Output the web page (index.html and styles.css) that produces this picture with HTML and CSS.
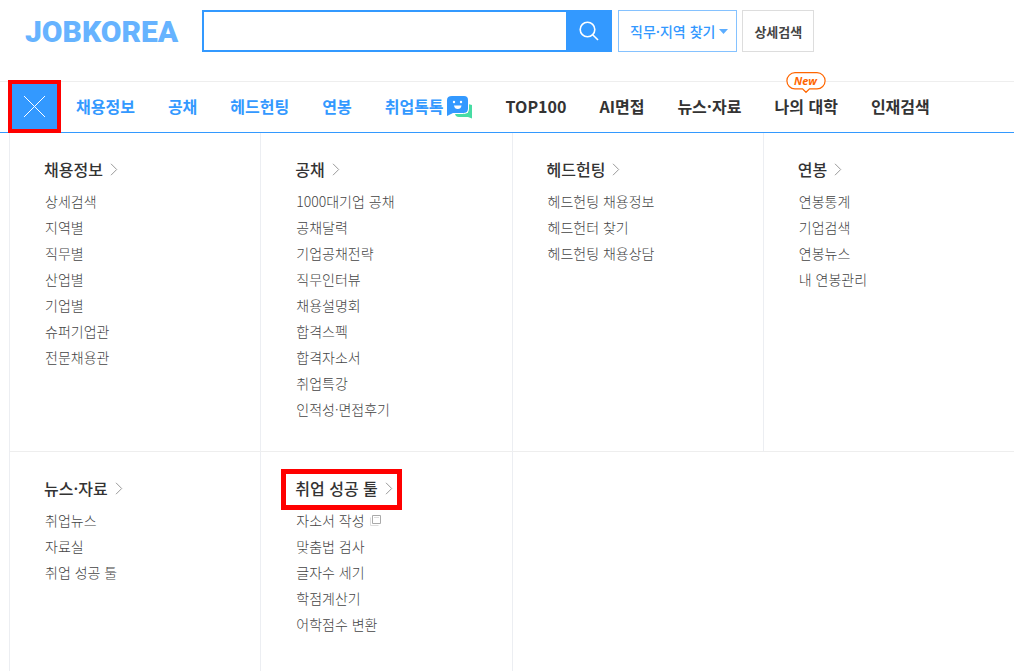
FILE: index.html
```html
<!DOCTYPE html>
<html lang="ko">
<head>
<meta charset="utf-8">
<meta name="viewport" content="width=device-width, initial-scale=1">
<title>JOBKOREA</title>
<link rel="stylesheet" href="styles.css">
</head>
<body>
<svg class="defs" aria-hidden="true">
  <symbol id="arrow" viewBox="0 0 8 13"><path d="M1 .8 6.7 6.5 1 12.2" fill="none" stroke="#999" stroke-width="1"/></symbol>
</svg>
<header class="header">
  <a class="logo" href="#">JOBKOREA</a>
  <form class="search">
    <input class="search-input" type="text" aria-label="검색어">
    <button class="search-button" type="button" aria-label="검색">
      <svg width="20" height="20" viewBox="0 0 20 20" fill="none" stroke="#fff" stroke-width="1.6"><circle cx="8.5" cy="8.5" r="7.3"/><path d="m13.7 13.7 5.3 5.3"/></svg>
    </button>
  </form>
  <button class="filter filter-blue" type="button">직무·지역 찾기<svg width="9" height="5" viewBox="0 0 9 5"><path d="M0 0h9L4.500 5z" fill="#5cadff"/></svg></button>
  <button class="filter" type="button">상세검색</button>
</header>
<nav class="nav" aria-label="주 메뉴">
  <button class="close" type="button" aria-label="전체메뉴 닫기">
    <svg width="23" height="23" viewBox="0 0 23 23"><path d="m1 1 21 21M22 1 1 22" stroke="#fff" stroke-width="1"/></svg>
  </button>
  <ul class="nav-list">
    <li><a class="blue" href="#">채용정보</a></li>
    <li><a class="blue" href="#">공채</a></li>
    <li><a class="blue" href="#">헤드헌팅</a></li>
    <li><a class="blue" href="#">연봉</a></li>
    <li><a class="blue talk" href="#">취업톡톡<svg width="26" height="24" viewBox="0 0 26 24"><path d="M8 17v1q0 4 4 4h9l4 1.500V10l-4-1v9z" fill="#47dca4"/><path d="M5 1h12q4 0 4 4v9q0 4-4 4H6l-6 3V5q0-4 5-4z" fill="#3399ff"/><path d="M21.500 9v5q0 4.500-5 4.500H8" fill="none" stroke="#fff"/><circle cx="7" cy="7" r="1.200" fill="#fff"/><circle cx="14" cy="7" r="1.200" fill="#fff"/><path d="M7 10.500h7.500q-.6 3.500-3.750 3.500T7 10.500z" fill="#fff"/></svg></a></li>
    <li><a href="#">TOP100</a></li>
    <li><a href="#">AI면접</a></li>
    <li><a href="#">뉴스·자료</a></li>
    <li class="has-badge"><a href="#">나의 대학</a>
      <span class="badge"><svg width="40" height="22" viewBox="0 0 40 22"><path d="M9 .7h22a8.100 8.100 0 0 1 0 16.200h-7.500L20 20.300l-3.500-3.400H9A8.100 8.100 0 0 1 9 .7z" fill="#fff" stroke="#f60" stroke-width="1.200"/></svg><span class="badge-text">New</span></span></li>
    <li><a href="#">인재검색</a></li>
  </ul>
</nav>
<main class="menu">
  <section class="cell">
    <h2><a href="#">채용정보<svg><use href="#arrow"/></svg></a></h2>
    <ul>
      <li><a href="#">상세검색</a></li>
      <li><a href="#">지역별</a></li>
      <li><a href="#">직무별</a></li>
      <li><a href="#">산업별</a></li>
      <li><a href="#">기업별</a></li>
      <li><a href="#">슈퍼기업관</a></li>
      <li><a href="#">전문채용관</a></li>
    </ul>
  </section>
  <section class="cell">
    <h2><a href="#">공채<svg><use href="#arrow"/></svg></a></h2>
    <ul>
      <li><a href="#">1000대기업 공채</a></li>
      <li><a href="#">공채달력</a></li>
      <li><a href="#">기업공채전략</a></li>
      <li><a href="#">직무인터뷰</a></li>
      <li><a href="#">채용설명회</a></li>
      <li><a href="#">합격스펙</a></li>
      <li><a href="#">합격자소서</a></li>
      <li><a href="#">취업특강</a></li>
      <li><a href="#">인적성·면접후기</a></li>
    </ul>
  </section>
  <section class="cell">
    <h2><a href="#">헤드헌팅<svg><use href="#arrow"/></svg></a></h2>
    <ul>
      <li><a href="#">헤드헌팅 채용정보</a></li>
      <li><a href="#">헤드헌터 찾기</a></li>
      <li><a href="#">헤드헌팅 채용상담</a></li>
    </ul>
  </section>
  <section class="cell">
    <h2><a href="#">연봉<svg><use href="#arrow"/></svg></a></h2>
    <ul>
      <li><a href="#">연봉통계</a></li>
      <li><a href="#">기업검색</a></li>
      <li><a href="#">연봉뉴스</a></li>
      <li><a href="#">내 연봉관리</a></li>
    </ul>
  </section>
  <section class="cell">
    <h2><a href="#">뉴스·자료<svg><use href="#arrow"/></svg></a></h2>
    <ul>
      <li><a href="#">취업뉴스</a></li>
      <li><a href="#">자료실</a></li>
      <li><a href="#">취업 성공 툴</a></li>
    </ul>
  </section>
  <section class="cell">
    <h2><a class="marked" href="#">취업 성공 툴<svg><use href="#arrow"/></svg></a></h2>
    <ul>
      <li><a href="#">자소서 작성<svg class="window" width="11" height="11" viewBox="0 0 11 11" fill="none"><path d="M.5 2.500v8h8" stroke="#ddd"/><path d="M2.500.5h8v8h-8z" stroke="#aaa"/><path d="M4 2.500h5" stroke="#ddd"/></svg></a></li>
      <li><a href="#">맞춤법 검사</a></li>
      <li><a href="#">글자수 세기</a></li>
      <li><a href="#">학점계산기</a></li>
      <li><a href="#">어학점수 변환</a></li>
    </ul>
  </section>
  <div class="cell rest"></div>
</main>
</body>
</html>
```

FILE: styles.css
```css
* { box-sizing: border-box; }

body {
  margin: 0;
  min-height: 100vh;
  display: flex;
  flex-direction: column;
  background: #fff;
  color: #333;
  font-family: "Noto Sans CJK KR", sans-serif;
}

a { color: inherit; text-decoration: none; }
ul { list-style: none; margin: 0; padding: 0; }
button { font-family: inherit; padding: 0; cursor: pointer; }
.defs { position: absolute; width: 0; height: 0; }

.header {
  display: flex;
  padding: 10px 0 29px 25px;
}

.logo {
  width: 177px;
  padding-top: 2px;
  line-height: 40px;
  font-family: Roboto, sans-serif;
  font-size: 30px;
  font-weight: 900;
  color: #66b3ff;
}

.search {
  display: flex;
  flex: 0 1 410px;
  height: 42px;
  margin-right: 6px;
}

.search-input {
  flex: 1;
  min-width: 0;
  border: 2px solid #39f;
  border-right: 0;
  padding: 0 12px;
  font-size: 16px;
  outline: 0;
}

.search-button {
  display: flex;
  align-items: center;
  justify-content: center;
  width: 46px;
  border: 0;
  background: #39f;
}

.filter {
  display: flex;
  align-items: center;
  gap: 4px;
  height: 42px;
  padding: 0 11px;
  margin-right: 5px;
  border: 1px solid #ddd;
  background: #fff;
  color: #444;
  font-size: 13px;
  font-weight: 700;
  white-space: nowrap;
}

.filter-blue {
  padding: 0 8px 0 11px;
  border-color: #85c2ff;
  color: #39f;
  font-size: 14px;
  font-weight: 500;
}

.nav {
  display: flex;
  height: 52px;
  padding-left: 8px;
  border-top: 1px solid #eee;
  border-bottom: 1px solid #39f;
}

.close {
  position: relative;
  display: flex;
  align-items: center;
  justify-content: center;
  width: 53px;
  height: 53px;
  margin-top: -2px;
  border: 4px solid #f00;
  background: #39f;
}

.nav-list {
  display: flex;
  gap: 33px;
  padding-left: 15px;
  font-size: 16px;
  font-weight: 700;
  line-height: 49px;
  white-space: nowrap;
}

.blue { color: #39f; }

.talk { display: flex; align-items: center; gap: 3px; }

.has-badge { position: relative; }

.badge {
  position: absolute;
  top: -10px;
  left: 11px;
  width: 40px;
  height: 22px;
}

.badge svg { display: block; }

.badge-text {
  position: absolute;
  inset: 0;
  color: #f60;
  font-family: "Open Sans", sans-serif;
  font-size: 11px;
  font-style: italic;
  line-height: 17px;
  text-align: center;
}

.menu {
  flex: 1;
  display: grid;
  grid-template-columns: repeat(4, 1fr);
  grid-template-rows: auto 1fr;
  margin-left: 9px;
}

.cell {
  padding: 24px 0 29px 34px;
  border-left: 1px solid #eceef2;
}

.cell:nth-child(-n+4) { border-bottom: 1px solid #eee; }

.rest { grid-column: span 2; }

.cell h2 {
  margin: 0 0 7px;
  font-size: 16px;
  font-weight: 500;
  line-height: 24px;
}

.cell h2 a {
  position: relative;
  display: inline-flex;
  align-items: center;
  gap: 7px;
  vertical-align: top;
}

.cell h2 svg { width: 8px; height: 13px; }

.marked::after {
  content: "";
  position: absolute;
  inset: -7px -9px -10px -14px;
  border: 5px solid #f00;
}

.cell li {
  padding-left: 1px;
  color: #444;
  font-size: 14px;
  font-weight: 300;
  line-height: 26px;
}

.window { margin-left: 5px; }
```
